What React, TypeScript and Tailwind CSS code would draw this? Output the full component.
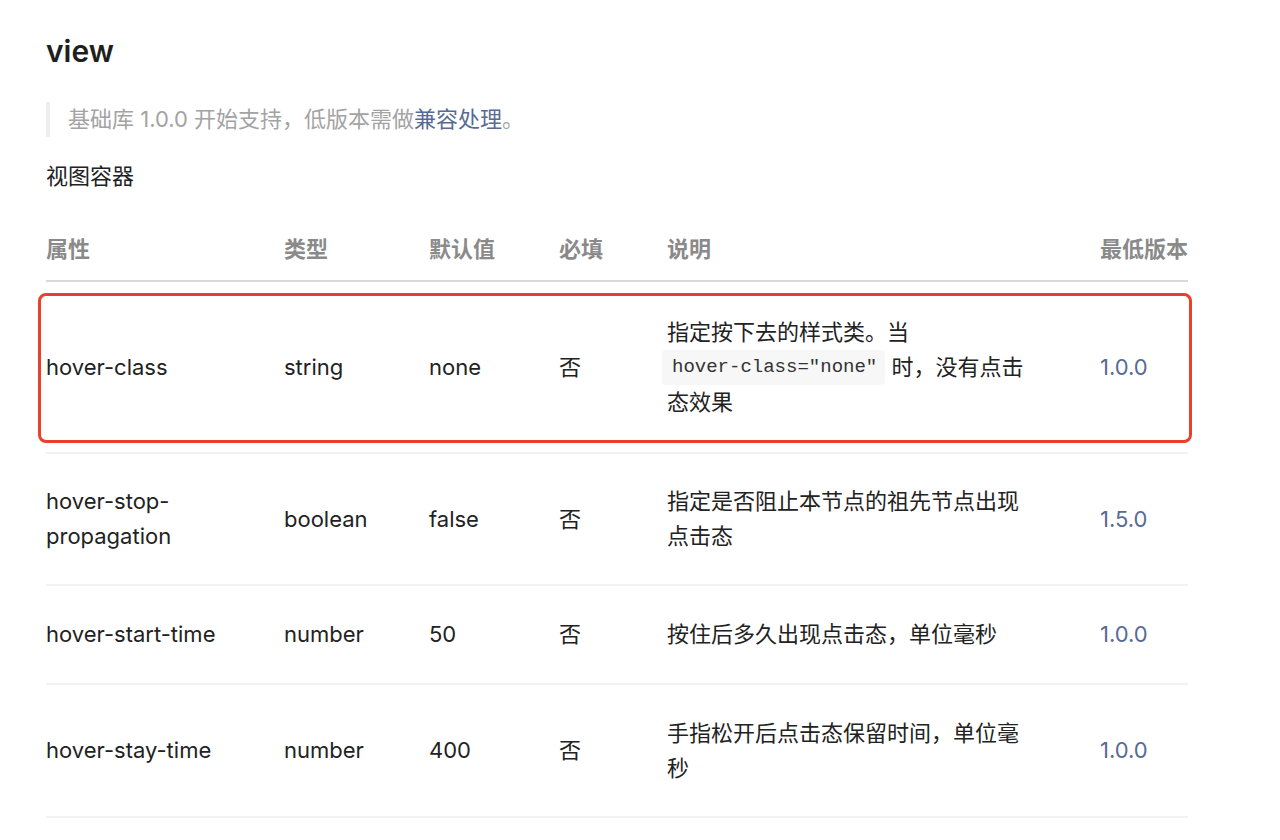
import React from 'react'

const font = { fontFamily: 'Inter, "Noto Sans CJK SC", sans-serif' }

type Row = {
  name: React.ReactNode
  type: string
  def: string
  desc: React.ReactNode
  ver: string
  highlight?: boolean
  h: string
}

const rows: Row[] = [
  {
    name: 'hover-class',
    type: 'string',
    def: 'none',
    desc: (
      <>
        指定按下去的样式类。当
        <code className="inline-block -ml-[5px] h-[35px] whitespace-nowrap rounded-[4px] bg-[#f7f7f7] pl-[10px] pr-[8px] align-top font-['Liberation_Mono',monospace] text-[19px] leading-[35px] text-[#333]">
          hover-class="none"
        </code>{' '}
        时，没有点击态效果
      </>
    ),
    ver: '1.0.0',
    highlight: true,
    h: 'h-[172px]',
  },
  {
    name: (
      <>
        hover-stop-
        <br />
        propagation
      </>
    ),
    type: 'boolean',
    def: 'false',
    desc: '指定是否阻止本节点的祖先节点出现点击态',
    ver: '1.5.0',
    h: 'h-[132px]',
  },
  {
    name: 'hover-start-time',
    type: 'number',
    def: '50',
    desc: '按住后多久出现点击态，单位毫秒',
    ver: '1.0.0',
    h: 'h-[99px]',
  },
  {
    name: 'hover-stay-time',
    type: 'number',
    def: '400',
    desc: '手指松开后点击态保留时间，单位毫秒',
    ver: '1.0.0',
    h: 'h-[133px]',
  },
]

const cols = 'grid grid-cols-[238px_145px_130px_108px_433px_88px]'

export default function App() {
  return (
    <div className="min-h-screen bg-white text-[#222]" style={font}>
      <div className="w-[1142px] ml-[46px] pt-[31px]">
        {/* 标题 */}
        <h1 className="text-[30px] leading-[40px] font-semibold text-[#1f1f1f]">view</h1>

        {/* 提示 */}
        <div className="mt-[31px] flex border-l-4 border-[#eeeeee] pl-[18px]">
          <p className="text-[22px] leading-[35px] text-[#a3a3a3]">
            基础库 1.0.0 开始支持，低版本需做<span className="text-[#576b95]">兼容处理</span>。
          </p>
        </div>

        <p className="mt-[22px] text-[22px] leading-[35px] text-[#222]">视图容器</p>

        {/* 属性表 */}
        <div className="mt-[24px]">
          <div className={`${cols} h-[64px] items-center border-b-2 border-[#d9d9d9] text-[22px] leading-[35px] font-bold text-[#8a8a8a]`}>
            <div>属性</div>
            <div>类型</div>
            <div>默认值</div>
            <div>必填</div>
            <div>说明</div>
            <div>最低版本</div>
          </div>

          {rows.map((r, i) => (
            <div
              key={i}
              className={`${cols} relative ${r.h} items-center border-b-2 border-[#f2f2f2] text-[22px] leading-[35px] text-[#222]`}
            >
              {r.highlight && (
                <div className="absolute -left-[8px] -right-[4px] top-[11px] bottom-[9px] rounded-[8px] border-[3px] border-[#e8402a] pointer-events-none" />
              )}
              <div>{r.name}</div>
              <div>{r.type}</div>
              <div>{r.def}</div>
              <div>否</div>
              <div className="pr-[66px]">{r.desc}</div>
              <div className="text-[#576b95]">{r.ver}</div>
            </div>
          ))}
        </div>
      </div>
    </div>
  )
}
